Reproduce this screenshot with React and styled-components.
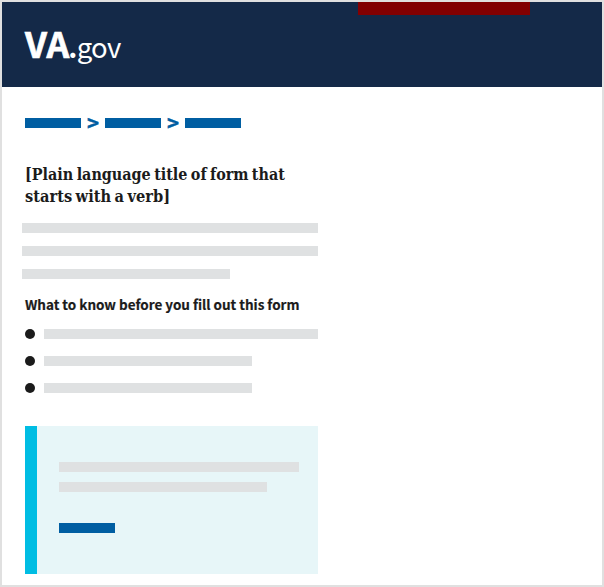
import React from 'react';
import styled, { createGlobalStyle } from 'styled-components';

const GlobalStyle = createGlobalStyle`
  *, *::before, *::after { box-sizing: border-box; }
  body { margin: 0; background: #fff; }
`;

const sans = `'Noto Sans CJK SC', 'Open Sans', sans-serif`;

const Page = styled.div`
  width: 604px;
  height: 587px;
  border: 2px solid #e0e0e0;
  background: #fff;
  color: #1b1b1b;
  font-family: ${sans};
  overflow: hidden;
`;

const Header = styled.header`
  display: flex;
  align-items: flex-start;
  justify-content: space-between;
  height: 85px;
  padding: 0 72px 0 23px;
  background: #142948;
`;

const Logo = styled.div`
  display: flex;
  align-items: baseline;
  height: 56px;
  margin-top: 13px;
  color: #fff;
  line-height: 56px;
  white-space: nowrap;
`;

const LogoName = styled.span`
  font-size: 35.5px;
  font-weight: 700;
  letter-spacing: 0.1px;
  -webkit-text-stroke: 0.7px #fff;
`;

const LogoDot = styled.span`
  margin-left: -1px;
  font-size: 28px;
  font-weight: 700;
`;

const LogoDomain = styled.span`
  margin-left: -0.7px;
  font-size: 27.5px;
  font-weight: 400;
  letter-spacing: -0.7px;
`;

const HeaderTab = styled.div`
  width: 172px;
  height: 13px;
  background: #820002;
`;

const Content = styled.main`
  width: 316px;
  padding: 31px 0 0 23px;
`;

const Bar = styled.div`
  flex: none;
  width: ${({ $width }) => $width}px;
  height: 10px;
  background: ${({ $link }) => ($link ? '#005ea2' : '#dfe1e2')};
`;

const Breadcrumbs = styled.nav`
  display: flex;
  align-items: center;
  height: 10px;
`;

const Separator = styled.span`
  width: 24px;
  height: 12px;
  color: #005ea2;
  font-size: 20.5px;
  font-weight: 700;
  line-height: 11px;
  text-align: center;
  -webkit-text-stroke: 0.4px #005ea2;
`;

const Title = styled.h1`
  height: 44px;
  margin: 36px 0 0;
  font-family: 'DejaVu Serif Condensed', 'DejaVu Serif', serif;
  font-size: 16px;
  font-stretch: condensed;
  font-weight: 700;
  line-height: 22px;
  white-space: nowrap;
  word-spacing: -1.6px;
`;

const TitleLine = styled.span`
  display: block;
  width: max-content;
  transform: scaleX(${({ $scale }) => $scale});
  transform-origin: left;
`;

const Paragraph = styled.div`
  display: flex;
  flex-direction: column;
  gap: 13px;
  margin: 15px 0 0 -3px;
`;

const Subtitle = styled.h2`
  height: 22px;
  margin: 14px 0 0;
  font-size: 13.5px;
  font-weight: 700;
  letter-spacing: -0.02px;
  line-height: 22px;
  white-space: nowrap;
  -webkit-text-stroke: 0.2px #1b1b1b;
`;

const List = styled.ul`
  display: flex;
  flex-direction: column;
  gap: 17px;
  margin: 14px 0 0;
  padding: 0;
  list-style: none;
`;

const Item = styled.li`
  display: flex;
  gap: 9px;
  height: 10px;

  &::before {
    content: '';
    width: 10px;
    height: 10px;
    border-radius: 50%;
    background: #1b1b1b;
  }
`;

const Alert = styled.section`
  display: flex;
  flex-direction: column;
  gap: 10px;
  height: 148px;
  margin-top: 33px;
  padding: 36px 0 0 22px;
  border-left: 12px solid #00bde3;
  background: #e7f6f8;
`;

const AlertAction = styled.div`
  margin-top: 21px;
`;

export default function App() {
  return (
    <>
      <GlobalStyle />
      <Page>
        <Header>
          <Logo>
            <LogoName>VA</LogoName>
            <LogoDot>.</LogoDot>
            <LogoDomain>gov</LogoDomain>
          </Logo>
          <HeaderTab />
        </Header>
        <Content>
          <Breadcrumbs>
            <Bar $link $width={56} />
            <Separator>&gt;</Separator>
            <Bar $link $width={56} />
            <Separator>&gt;</Separator>
            <Bar $link $width={56} />
          </Breadcrumbs>
          <Title>
            <TitleLine $scale={0.997}>[Plain language title of form that</TitleLine>
            <TitleLine $scale={1.015}>starts with a verb]</TitleLine>
          </Title>
          <Paragraph>
            <Bar $width={296} />
            <Bar $width={296} />
            <Bar $width={208} />
          </Paragraph>
          <Subtitle>What to know before you fill out this form</Subtitle>
          <List>
            <Item><Bar $width={274} /></Item>
            <Item><Bar $width={208} /></Item>
            <Item><Bar $width={208} /></Item>
          </List>
          <Alert>
            <Bar $width={240} />
            <Bar $width={208} />
            <AlertAction>
              <Bar $link $width={56} />
            </AlertAction>
          </Alert>
        </Content>
      </Page>
    </>
  );
}
